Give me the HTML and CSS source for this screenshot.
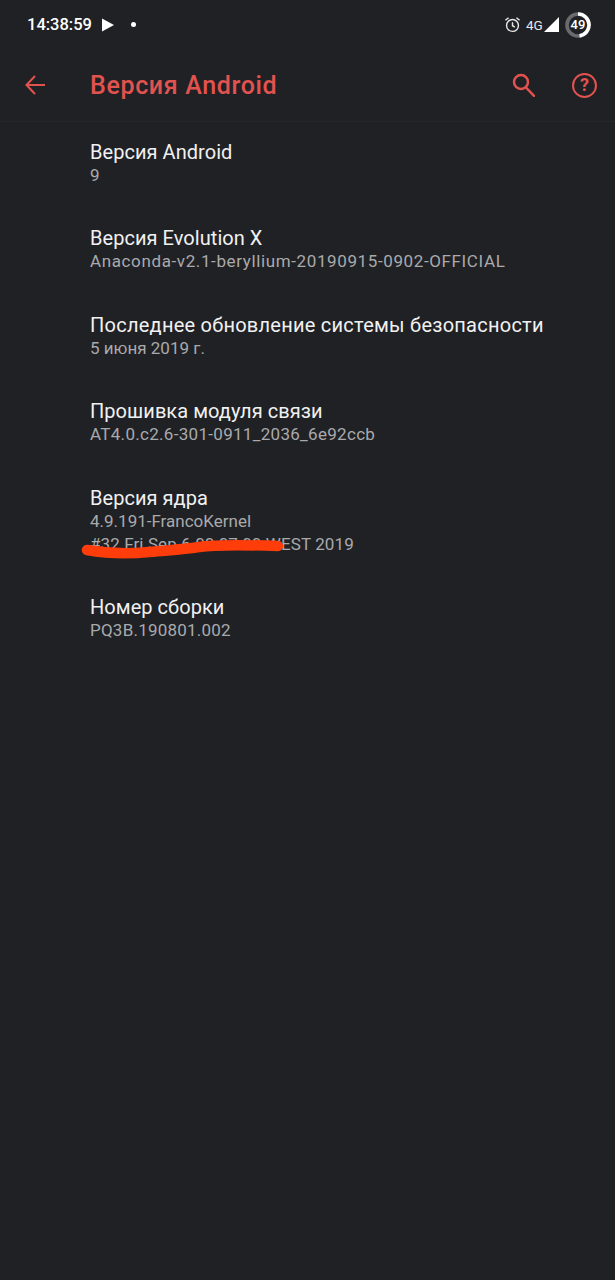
FILE: index.html
```html
<!DOCTYPE html>
<html lang="ru">
<head>
<meta charset="utf-8">
<title>Версия Android</title>
<link rel="stylesheet" href="styles.css">
</head>
<body>
<div class="screen">
  <div class="status">
    <span class="time">14:38:59</span>
    <svg class="play" width="14" height="16" viewBox="0 0 14 16"><path d="M1 1.500 13 8 1 14.500z" fill="#fff"/></svg>
    <span class="dot"></span>
    <span class="spacer"></span>
    <svg class="alarm" width="17" height="17" viewBox="0 0 18 18" fill="none" stroke="#e8e8e8" stroke-width="1.500"><circle cx="9" cy="10" r="6.300"/><path d="M9 6.500V10.300L11.500 11.800M1.500 4.500 4.800 1.800M16.500 4.500 13.200 1.800"/></svg>
    <span class="net">4G</span>
    <svg class="signal" width="15" height="15" viewBox="0 0 16 16"><path d="M16 0V16H0z" fill="#fff"/></svg>
    <span class="battery">
      <svg width="26" height="26" viewBox="0 0 26 26" fill="none" stroke-width="3.600"><circle cx="13" cy="13" r="11" stroke="#6b6b6d"/><path d="M13 2A11 11 0 0 1 14.500 23.900" stroke="#fff"/></svg>
      <span class="level">49</span>
    </span>
  </div>
  <header class="toolbar">
    <svg class="back" width="20" height="20" viewBox="0 0 20 20" fill="none" stroke="#e2534f" stroke-width="2"><path d="M20 10H1.500M10 1 1.500 10l8.500 9"/></svg>
    <h1 class="title">Версия Android</h1>
    <svg class="search" width="23" height="24" viewBox="0 0 23 24" fill="none" stroke="#e2534f" stroke-width="2.500"><circle cx="9" cy="9" r="7"/><path d="M14 14.500 22 22.800" stroke-linecap="round"/></svg>
    <span class="help">?</span>
  </header>
  <main class="list">
    <div class="row"><div class="name">Версия Android</div><div class="value">9</div></div>
    <div class="row"><div class="name">Версия Evolution X</div><div class="value wider">Anaconda-v2.1-beryllium-20190915-0902-OFFICIAL</div></div>
    <div class="row"><div class="name wide">Последнее обновление системы безопасности</div><div class="value tight">5 июня 2019 г.</div></div>
    <div class="row"><div class="name">Прошивка модуля связи</div><div class="value wide">AT4.0.c2.6-301-0911_2036_6e92ccb</div></div>
    <div class="row">
      <div class="name">Версия ядра</div>
      <div class="value tight">4.9.191-FrancoKernel</div>
      <div class="value kernel">#32 Fri Sep 6 00:07:00 WEST 2019
        <svg class="scribble" width="206" height="30" viewBox="0 0 206 30" fill="none"><path d="M8 17C25 20 50 21 70 19S100 17 120 14 170 12 199 13" stroke="#ff3d0a" stroke-width="10.500" stroke-linecap="round"/></svg>
      </div>
    </div>
    <div class="row"><div class="name">Номер сборки</div><div class="value build">PQ3B.190801.002</div></div>
  </main>
</div>
</body>
</html>
```
FILE: styles.css
```css
* { box-sizing: border-box; }
html, body { margin: 0; padding: 0; }
body { background: #202125; font-family: Roboto, "Noto Sans", sans-serif; }
.screen { width: 615px; height: 1280px; background: #202125; overflow: hidden; }
.status {
  display: flex; align-items: center; height: 49px; padding: 0 24px 0 27px; color: #fff;
}
.time { font-size: 16.500px; font-weight: 500; width: 64px; }
.play { margin-left: 10px; }
.dot { width: 5px; height: 5px; border-radius: 50%; background: #fff; margin-left: 16px; }
.spacer { flex: 1; }
.alarm { margin-right: 5px; }
.net { font-size: 13.500px; color: #e8e8e8; width: 16px; margin-right: 2px; white-space: nowrap; }
.signal { margin-right: 6px; }
.battery { position: relative; width: 26px; height: 26px; display: flex; align-items: center; justify-content: center; }
.battery svg { position: absolute; left: 0; top: 0; }
.level { position: relative; font-size: 13px; font-weight: 500; color: #fff; }
.toolbar {
  display: flex; align-items: center; height: 73px; padding: 0 18px 0 25px;
  border-bottom: 1px solid #26272b;
}
.back { flex: none; }
.title {
  flex: 1; margin: 0 0 0 45px; color: #e2534f; font-size: 25px; font-weight: 500; letter-spacing: 0.65px;
}
.search { margin-right: 37px; }
.help {
  width: 25px; height: 25px; border: 2.500px solid #e2534f; border-radius: 50%;
  color: #e2534f; font-size: 18px; font-weight: 700; line-height: 20px; text-align: center;
}
.list { padding: 18px 24px 0 90px; }
.row { padding-bottom: 39.400px; }
.name { color: #f1f1f2; font-size: 20px; line-height: 24px; height: 24px; white-space: nowrap; letter-spacing: 0.05px; }
.name.wide { letter-spacing: 0.25px; }
.value { color: #a9aaac; font-size: 17px; line-height: 23px; height: 23px; white-space: nowrap; letter-spacing: 0.1px; }
.value.wide { letter-spacing: 0.3px; }
.value.wider { letter-spacing: 0.62px; }
.value.tight { letter-spacing: 0; }
.value.build { letter-spacing: 0.22px; }
.kernel { position: relative; }
.scribble { position: absolute; left: -11px; top: 0; }
```
